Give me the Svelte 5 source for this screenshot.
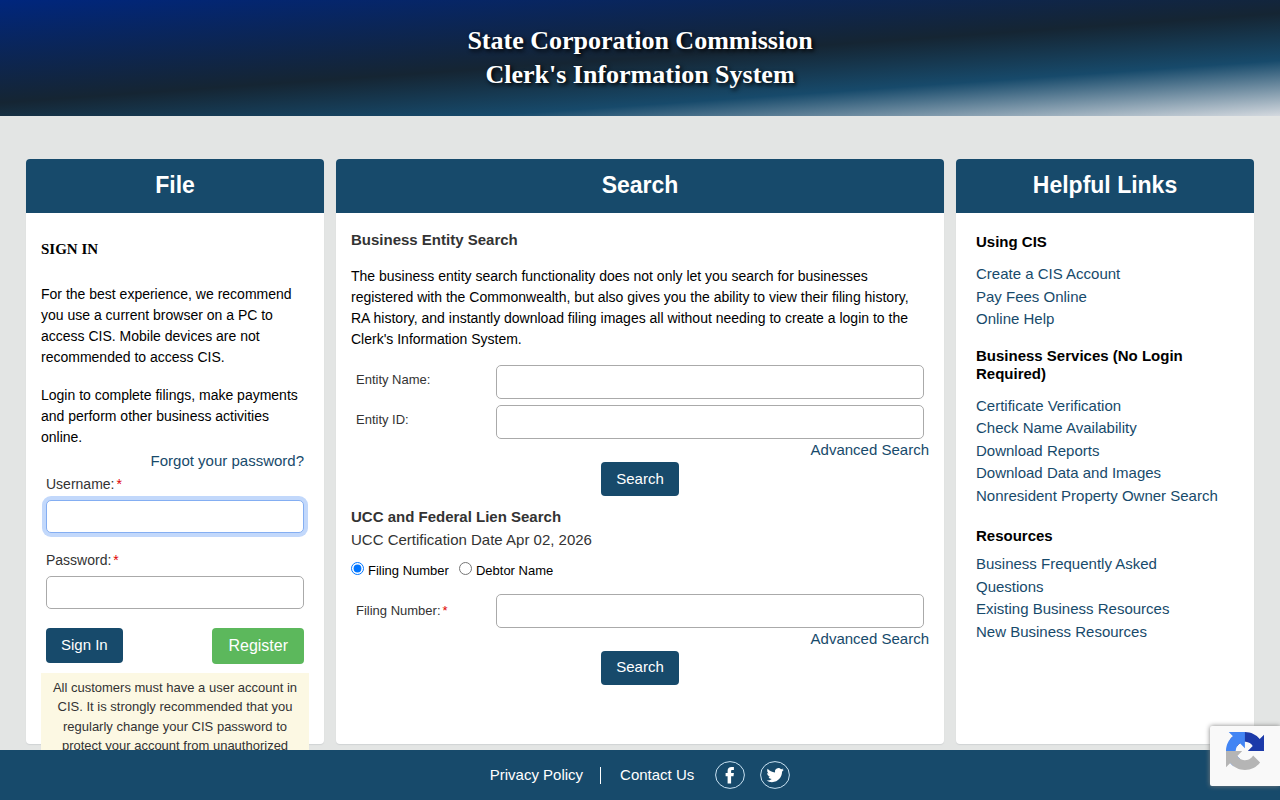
<script>
  let username = $state('');
  let password = $state('');
  let entityName = $state('');
  let entityId = $state('');
  let filingNumber = $state('');
  let searchBy = $state('filing');

  const linkGroups = [
    {
      title: 'Using CIS',
      links: ['Create a CIS Account', 'Pay Fees Online', 'Online Help']
    },
    {
      title: 'Business Services (No Login Required)',
      links: [
        'Certificate Verification',
        'Check Name Availability',
        'Download Reports',
        'Download Data and Images',
        'Nonresident Property Owner Search'
      ]
    },
    {
      title: 'Resources',
      compact: true,
      links: [
        'Business Frequently Asked Questions',
        'Existing Business Resources',
        'New Business Resources'
      ]
    }
  ];
</script>

<div class="page">
  <header class="banner">
    <h1>State Corporation Commission<br />Clerk's Information System</h1>
  </header>

  <main class="columns">
    <section class="card">
      <h2 class="card-title">File</h2>
      <div class="card-body">
        <h3 class="sign-in-title">SIGN IN</h3>
        <p class="intro">
          For the best experience, we recommend you use a current browser on a PC to access CIS.
          Mobile devices are not recommended to access CIS.
        </p>
        <p>Login to complete filings, make payments and perform other business activities online.</p>
        <form class="login" onsubmit={(e) => e.preventDefault()}>
          <a class="forgot" href="#forgot">Forgot your password?</a>
          <label for="username">Username:<span class="required">*</span></label>
          <input id="username" class="text-box active" type="text" bind:value={username} />
          <label class="second" for="password">Password:<span class="required">*</span></label>
          <input id="password" class="text-box" type="password" bind:value={password} />
          <div class="actions">
            <button class="btn" type="submit">Sign In</button>
            <button class="btn register" type="button">Register</button>
          </div>
        </form>
        <p class="notice">
          All customers must have a user account in CIS. It is strongly recommended that you
          regularly change your CIS password to protect your account from unauthorized
        </p>
      </div>
    </section>

    <section class="card">
      <h2 class="card-title">Search</h2>
      <div class="card-body search">
        <h3>Business Entity Search</h3>
        <p>
          The business entity search functionality does not only let you search for businesses
          registered with the Commonwealth, but also gives you the ability to view their filing
          history, RA history, and instantly download filing images all without needing to create a
          login to the Clerk's Information System.
        </p>
        <form class="fields" onsubmit={(e) => e.preventDefault()}>
          <div class="field">
            <label for="entity-name">Entity Name:</label>
            <input id="entity-name" class="text-box" type="text" bind:value={entityName} />
          </div>
          <div class="field">
            <label for="entity-id">Entity ID:</label>
            <input id="entity-id" class="text-box" type="text" bind:value={entityId} />
          </div>
          <a class="advanced" href="#entity">Advanced Search</a>
          <button class="btn" type="submit">Search</button>
        </form>

        <h3 class="ucc">UCC and Federal Lien Search</h3>
        <div class="certified">UCC Certification Date Apr 02, 2026</div>
        <form class="fields ucc-fields" onsubmit={(e) => e.preventDefault()}>
          <div class="choices">
            <input id="by-filing" type="radio" name="by" value="filing" bind:group={searchBy} />
            <label for="by-filing">Filing Number</label>
            <input id="by-debtor" type="radio" name="by" value="debtor" bind:group={searchBy} />
            <label for="by-debtor">Debtor Name</label>
          </div>
          <div class="field">
            <label for="filing-number">Filing Number:<span class="required">*</span></label>
            <input id="filing-number" class="text-box" type="text" bind:value={filingNumber} />
          </div>
          <a class="advanced" href="#ucc">Advanced Search</a>
          <button class="btn" type="submit">Search</button>
        </form>
      </div>
    </section>

    <section class="card">
      <h2 class="card-title">Helpful Links</h2>
      <div class="card-body links">
        {#each linkGroups as group}
          <div class="group" class:compact={group.compact}>
            <h3>{group.title}</h3>
            <ul>
              {#each group.links as link}
                <li><a href="#link">{link}</a></li>
              {/each}
            </ul>
          </div>
        {/each}
      </div>
    </section>
  </main>

  <footer>
    <a href="#privacy">Privacy Policy</a>
    <span class="divider"></span>
    <a href="#contact">Contact Us</a>
    <a class="social" href="#facebook" aria-label="Facebook">
      <svg viewBox="0 0 30 28" width="30" height="28">
        <ellipse cx="15" cy="14" rx="14.4" ry="13.4" fill="none" stroke="#c9e2f2" />
        <path
          fill="#fff"
          d="M12.600 22.500v-7.300H10.600v-3.200h2V9.800c0-2.600 1.400-3.900 4-3.900h2.300v3.100h-1.500c-1 0-1.300.4-1.300 1.200v1.800h2.800l-.4 3.200h-2.400v7.300z"
        />
      </svg>
    </a>
    <a class="social" href="#twitter" aria-label="Twitter">
      <svg viewBox="0 0 30 28" width="30" height="28">
        <ellipse cx="15" cy="14" rx="14.4" ry="13.4" fill="none" stroke="#c9e2f2" />
        <path
          fill="#fff"
          transform="translate(6.500 5.500) scale(.72)"
          d="M23.953 4.570a10 10 0 01-2.825.775 4.958 4.958 0 002.163-2.723c-.951.555-2.005.959-3.127 1.184a4.920 4.920 0 00-8.384 4.482C7.690 8.095 4.067 6.130 1.640 3.162a4.822 4.822 0 00-.666 2.475c0 1.710.870 3.213 2.188 4.096a4.904 4.904 0 01-2.228-.616v.060a4.923 4.923 0 003.946 4.827 4.996 4.996 0 01-2.212.085 4.936 4.936 0 004.604 3.417 9.867 9.867 0 01-6.102 2.105c-.390 0-.779-.023-1.170-.067a13.995 13.995 0 007.557 2.209c9.053 0 13.998-7.496 13.998-13.985 0-.210 0-.420-.015-.630A9.935 9.935 0 0024 4.590z"
        />
      </svg>
    </a>
  </footer>

  <div class="captcha">
    <svg viewBox="0 0 64 64" width="38" height="38" role="img" aria-label="reCAPTCHA">
      <path
        fill="#1c3aa9"
        d="M64 31.955l-.033-1.370V4.687l-7.160 7.160C50.948 4.674 42.033.093 32.050.093c-10.400 0-19.622 4.960-25.458 12.640l11.736 11.860a15.550 15.550 0 0 1 4.754-5.334c2.050-1.600 4.952-2.906 8.968-2.906.485 0 .860.057 1.135.163 4.976.393 9.288 3.140 11.828 7.124l-8.307 8.307L64 31.953"
      />
      <path
        fill="#4285f4"
        d="M31.862.094l-1.370.033H4.594l7.160 7.160C4.580 13.147 0 22.060 0 32.046c0 10.400 4.960 19.622 12.640 25.458L24.500 45.768a15.550 15.550 0 0 1-5.334-4.754c-1.600-2.050-2.906-4.952-2.906-8.968 0-.485.057-.860.163-1.135.393-4.976 3.140-9.288 7.124-11.828l8.307 8.307L31.860.095"
      />
      <path
        fill="#b5b5b5"
        d="M.001 32.045l.033 1.370v25.898l7.160-7.160c5.860 7.173 14.774 11.754 24.760 11.754 10.400 0 19.622-4.960 25.458-12.640l-11.736-11.860a15.550 15.550 0 0 1-4.754 5.334c-2.050 1.600-4.952 2.906-8.968 2.906-.485 0-.860-.057-1.135-.163-4.976-.393-9.288-3.140-11.828-7.124l8.307-8.307c-10.522.040-22.400.066-27.295-.005"
      />
    </svg>
  </div>
</div>

<style>
  :global(body) {
    margin: 0;
    background: #e3e5e4;
  }

  .page {
    display: flex;
    flex-direction: column;
    height: 100vh;
    font-family: 'Liberation Sans', Arial, sans-serif;
    font-size: 15px;
    line-height: 1.5;
    color: #333;
  }

  .page * {
    box-sizing: border-box;
  }

  h1,
  h2,
  h3,
  p,
  ul {
    margin: 0;
    padding: 0;
  }

  a {
    color: #174a6b;
    text-decoration: none;
  }

  .banner {
    padding: 24px 0;
    background: linear-gradient(176deg, #00267d 0%, #152533 50%, #174a6b 73%, #d4d9df 100%);
    text-align: center;
  }

  h1 {
    font: bold 26px/34px 'Liberation Serif', 'Times New Roman', serif;
    color: #fff;
    text-shadow: 2px 2px 4px #000;
  }

  .columns {
    display: grid;
    grid-template-columns: 1fr 2fr 1fr;
    grid-template-rows: minmax(0, 1fr);
    flex: 1;
    min-height: 0;
    overflow: hidden;
    padding: 43px 20px 6px;
  }

  .card {
    margin: 0 6px;
    background: #fff;
    border-radius: 4px;
    box-shadow: 0 1px 1px #d0d3d4;
  }

  .card-title {
    padding-bottom: 2px;
    background: #174a6b;
    border-radius: 4px 4px 0 0;
    color: #fff;
    font-size: 23px;
    line-height: 52px;
    text-align: center;
  }

  .card-body {
    padding: 0 15px;
  }

  h3 {
    font-size: 15px;
    line-height: 18px;
  }

  p {
    font-size: 14px;
    line-height: 21px;
    color: #000;
  }

  .sign-in-title {
    padding: 27px 0 26px;
    font-family: 'Liberation Serif', 'Times New Roman', serif;
    color: #000;
  }

  .intro {
    margin-bottom: 17px;
  }

  .login {
    display: flex;
    flex-direction: column;
    padding: 2px 5px 0;
  }

  .forgot {
    align-self: flex-end;
  }

  label {
    font-size: 14px;
    line-height: 20px;
  }

  .login label {
    margin: 1px 0 6px;
  }

  .login .second {
    margin-top: 17px;
  }

  .required {
    margin-left: 2px;
    color: #e00000;
  }

  .text-box {
    width: 100%;
    height: 34px;
    padding: 0 10px;
    border: 1px solid #aaa;
    border-radius: 5px;
    background: #fff;
    font: inherit;
  }

  .login .text-box {
    height: 33px;
  }

  .active {
    border-color: #84aef2;
    box-shadow: 0 0 0 4px #c2d8fb;
  }

  .actions {
    display: flex;
    align-items: flex-start;
    justify-content: space-between;
    margin: 19px 0 9px;
  }

  .btn {
    height: 34px;
    padding: 0 15px;
    border: 0;
    border-radius: 4px;
    background: #174a6b;
    color: #fff;
    font: inherit;
  }

  .login .btn {
    height: 35px;
  }

  .login .register {
    height: 36px;
    padding: 0 16px;
    background: #5cb85c;
    font-size: 16px;
  }

  .notice {
    padding: 5px 8px;
    background: #fcf8e3;
    color: #333;
    font-size: 13px;
    line-height: 1.5;
    text-align: center;
  }

  .search h3 {
    padding: 18px 0 17px;
  }

  .fields {
    display: flex;
    flex-direction: column;
    align-items: center;
    padding-top: 15px;
  }

  .field {
    display: grid;
    grid-template-columns: 140px 1fr;
    width: 100%;
    margin-bottom: 6px;
    padding: 0 5px;
  }

  .field label {
    padding-top: 5px;
    font-size: 13px;
  }

  .advanced {
    align-self: flex-end;
    margin: -6px 0 1px;
    line-height: 22px;
  }

  .search .ucc {
    padding: 12px 0 3px;
  }

  .ucc-fields {
    padding-top: 8px;
  }

  .ucc-fields .field label {
    padding-top: 7px;
  }

  .choices {
    display: flex;
    align-self: flex-start;
    margin-bottom: 13px;
    color: #000;
  }

  .choices label {
    margin-right: 10px;
    padding-top: 1px;
    font-size: 13px;
  }

  .choices input {
    width: 13px;
    height: 13px;
    margin: 2px 4px 0 0;
    accent-color: #0075ff;
  }

  .links {
    padding: 20px 20px 0;
  }

  .group {
    margin-bottom: 16px;
  }

  .group h3 {
    margin-bottom: 12px;
    color: #000;
  }

  .group ul {
    list-style: none;
  }

  .compact {
    padding: 4px 30px 0 0;
  }

  .compact h3 {
    margin-bottom: 8px;
  }

  footer {
    display: flex;
    align-items: center;
    justify-content: center;
    height: 50px;
    background: #174a6b;
  }

  footer a {
    color: #fff;
  }

  .divider {
    width: 1px;
    height: 17px;
    margin: 0 19px 0 17px;
    background: #fff;
  }

  .social {
    display: flex;
    margin-left: 15px;
  }

  footer .divider + a {
    margin-right: 6px;
  }

  .captcha {
    position: fixed;
    right: 0;
    bottom: 14px;
    width: 70px;
    height: 60px;
    padding: 6px 16px;
    border-radius: 2px 0 0 2px;
    background: #f9f9f9;
    box-shadow: 0 0 5px gray;
  }
</style>
